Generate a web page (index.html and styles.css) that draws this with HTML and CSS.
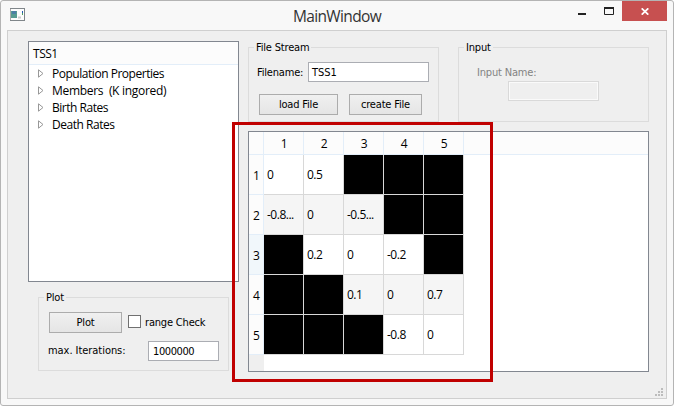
FILE: index.html
```html
<!DOCTYPE html>
<html lang="en">
<head>
<meta charset="utf-8">
<title>MainWindow</title>
<link rel="stylesheet" href="styles.css">
</head>
<body>
<div class="window">
  <header class="titlebar">
    <svg class="app-icon" width="15" height="13" viewBox="0 0 15 13"><rect x=".5" y=".5" width="14" height="12" fill="#fdfdfd" stroke="#aaa"/><path d="M0 .5h15M14.5 0v13M0 12.5h15" stroke="#80868a"/><rect x="1" y="3" width="6" height="7" fill="#579b91"/><path d="M2 3h4v3H2z" fill="#4c7fa5"/><path d="M12.5 3v2" stroke="#2459b5"/><path d="M12.5 5v2" stroke="#4d9d62"/><path d="M8 9.500h3" stroke="#ccc" stroke-width="2"/></svg>
    <h1 class="title">MainWindow</h1>
    <div class="controls">
      <svg class="minimize" width="8" height="2"><path d="M0 1h8" stroke="#222" stroke-width="2"/></svg>
      <svg class="maximize" width="10" height="8"><path d="M.5 1v6.500h9V1" fill="none" stroke="#222"/><path d="M0 1h10" stroke="#222" stroke-width="2"/></svg>
      <div class="close"><svg width="8" height="7" viewBox="0 0 8 7"><path d="M.7.3l6.600 6.400M7.300.3L.7 6.700" stroke="#fff" stroke-width="1.700"/></svg></div>
    </div>
  </header>
  <main class="client">
    <section class="left">
      <div class="tree">
        <div class="tree-head">TSS1</div>
        <ul>
          <li><svg width="6" height="9"><path d="M.5 .8v7.400L5 4.500z"/></svg><span>Population Properties</span></li>
          <li><svg width="6" height="9"><path d="M.5 .8v7.400L5 4.500z"/></svg><span class="members">Members&nbsp; (K ingored)</span></li>
          <li><svg width="6" height="9"><path d="M.5 .8v7.400L5 4.500z"/></svg><span>Birth Rates</span></li>
          <li><svg width="6" height="9"><path d="M.5 .8v7.400L5 4.500z"/></svg><span>Death Rates</span></li>
        </ul>
      </div>
      <div class="group plot">
        <div class="legend">Plot</div>
        <div class="plot-row"><div class="button">Plot</div><div class="check"></div><span class="range">range Check</span></div>
        <div class="iter-row"><span class="iter">max. Iterations:</span><div class="field number">1000000</div></div>
      </div>
    </section>
    <section class="right">
      <div class="groups">
        <div class="group stream">
          <div class="legend">File Stream</div>
          <div class="file-row"><span>Filename:</span><div class="field">TSS1</div></div>
          <div class="buttons"><div class="button load">load File</div><div class="button create">create File</div></div>
        </div>
        <div class="group input">
          <div class="legend">Input</div>
          <div class="input-name">Input Name:</div>
          <div class="disabled"></div>
        </div>
      </div>
      <div class="table">
        <div class="row head"><b></b><i>1</i><i>2</i><i>3</i><i>4</i><i>5</i></div>
        <div class="row"><b>1</b><i>0</i><i>0.5</i><i class="k"></i><i class="k"></i><i class="k"></i></div>
        <div class="row alt"><b>2</b><i>-0.8...</i><i>0</i><i>-0.5...</i><i class="k"></i><i class="k"></i></div>
        <div class="row"><b class="current">3</b><i class="k"></i><i>0.2</i><i>0</i><i>-0.2</i><i class="k"></i></div>
        <div class="row alt"><b>4</b><i class="k"></i><i class="k"></i><i>0.1</i><i>0</i><i>0.7</i></div>
        <div class="row"><b>5</b><i class="k"></i><i class="k"></i><i class="k"></i><i>-0.8</i><i>0</i></div>
        <div class="corner"></div>
      </div>
    </section>
    <svg class="grip" width="8" height="8" fill="#bcbcbc"><path d="M6 0h2v2H6zM3 3h2v2H3zM6 3h2v2H6zM0 6h2v2H0zM3 6h2v2H3zM6 6h2v2H6z"/></svg>
  </main>
  <div class="highlight"></div>
</div>
</body>
</html>
```
FILE: styles.css
```css
* { box-sizing: border-box; }
body { margin: 0; background: #fff; }
svg { display: block; flex: none; }
.window {
  position: relative; width: 674px; height: 406px; padding: 0 6px;
  background: #f8f8f8; border: 1px solid #b4b4b4; border-radius: 3px;
  font: 11px/14px "DejaVu Sans Condensed", "DejaVu Sans", sans-serif;
  font-stretch: condensed; letter-spacing: -.18px; color: #000; white-space: nowrap;
}
.titlebar { height: 29px; display: flex; position: relative; }
.app-icon { margin: 7px 0 0 3px; }
.title {
  margin: 3px 0 0 268px; width: 90px; font: 15.5px/24px "Open Sans", sans-serif;
  letter-spacing: -.65px; color: #333;
}
.controls { display: flex; margin-left: auto; }
.minimize { margin-top: 12px; }
.maximize { margin: 6px 8px 0 18px; }
.close { width: 45px; height: 20px; background: #c75050; display: grid; place-items: center; padding-top: 1px; }
.client {
  position: relative; width: 660px; height: 369px; background: #efefef;
  border: 1px solid #cfcfcf; padding: 10px 0 0 20px; display: flex; gap: 9px;
}
.left { width: 211px; }
.tree { height: 241px; border: 1px solid #828790; background: #fff; font: 12px/17px "Open Sans", sans-serif; letter-spacing: -.47px; }
.tree-head { height: 23px; padding: 3px 0 0 4px; border-bottom: 1px solid #e3eef9; background: #fcfcfc; }
.tree ul { list-style: none; margin: 0; padding: 0; }
.tree li { display: flex; align-items: center; height: 17px; padding-left: 9px; gap: 8px; }
.tree li svg { fill: none; stroke: #989898; }
.members { letter-spacing: -.3px; }
.group { border: 1px solid #dcdcdc; width: 191px; }
.legend { width: max-content; height: 14px; margin: -7px 0 0 5px; padding: 0 2px; background: #efefef; }
.plot { margin: 15px 0 0 10px; height: 74px; }
.plot-row { display: flex; align-items: center; margin: 7px 0 0 10px; }
.button {
  width: 73px; height: 21px; border: 1px solid #acacac; text-align: center; line-height: 20px;
  background: linear-gradient(#f0f0f0, #e5e5e5);
}
.check { width: 13px; height: 13px; border: 1px solid #707070; background: #fff; margin: -2px 4px 0 6px; }
.iter-row { display: flex; margin: 8px 0 0 9px; }
.iter { width: 100px; line-height: 20px; letter-spacing: -.05px; }
.field { height: 20px; border: 1px solid #abadb3; background: #fff; padding: 1px 0 0 3px; line-height: 18px; }
.file-row .field { letter-spacing: 0; }
.number { width: 71px; padding-left: 4px; letter-spacing: -.4px; }
.groups { display: flex; gap: 19px; padding-top: 6px; }
.stream, .input { height: 75px; }
.file-row { display: flex; margin: 7px 0 0 8px; }
.file-row span { width: 51px; line-height: 21px; }
.file-row .field { width: 121px; }
.buttons { display: flex; gap: 11px; margin: 11px 0 0 10px; }
.load { width: 79px; }
.input-name { color: #838383; margin: 11px 0 0 18px; }
.disabled { width: 91px; height: 20px; border: 1px solid #d9d9d9; box-shadow: inset 0 0 0 1px #fafafa; margin: 1px 0 0 49px; }
.table {
  width: 401px; height: 241px; margin-top: 9px; border: 1px solid #828790; background: #fff;
  font: 12px/15px "Open Sans", sans-serif; letter-spacing: -.5px;
}
.row { display: grid; grid-template-columns: 15px repeat(5, 40px); height: 40px; }
.row b, .row i { font-weight: 400; font-style: normal; }
.row b { border-right: 1px solid #e3eef9; border-bottom: 1px solid #e3eef9; background: #fcfcfc; padding: 13px 0 0 4px; }
.row .current { background: #f1f7fb; }
.row i { border-right: 1px solid #d8d8d8; border-bottom: 1px solid #d8d8d8; padding: 12px 0 0 3px; }
.alt i { background: #f5f5f5; }
.row .k { background: #000; }
.head { height: 23px; border-bottom: 1px solid #e3eef9; background: #fcfcfc; }
.head b { border-bottom: 0; }
.head i { border-bottom: 0; border-right-color: #e3eef9; padding: 4px 0 0 1px; text-align: center; }
.corner { width: 15px; height: 16px; background: #efefef; }
.grip { position: absolute; right: 3px; bottom: 2px; }
.highlight { position: absolute; left: 231px; top: 121px; width: 261px; height: 260px; border: 3px solid #c00000; }
```
